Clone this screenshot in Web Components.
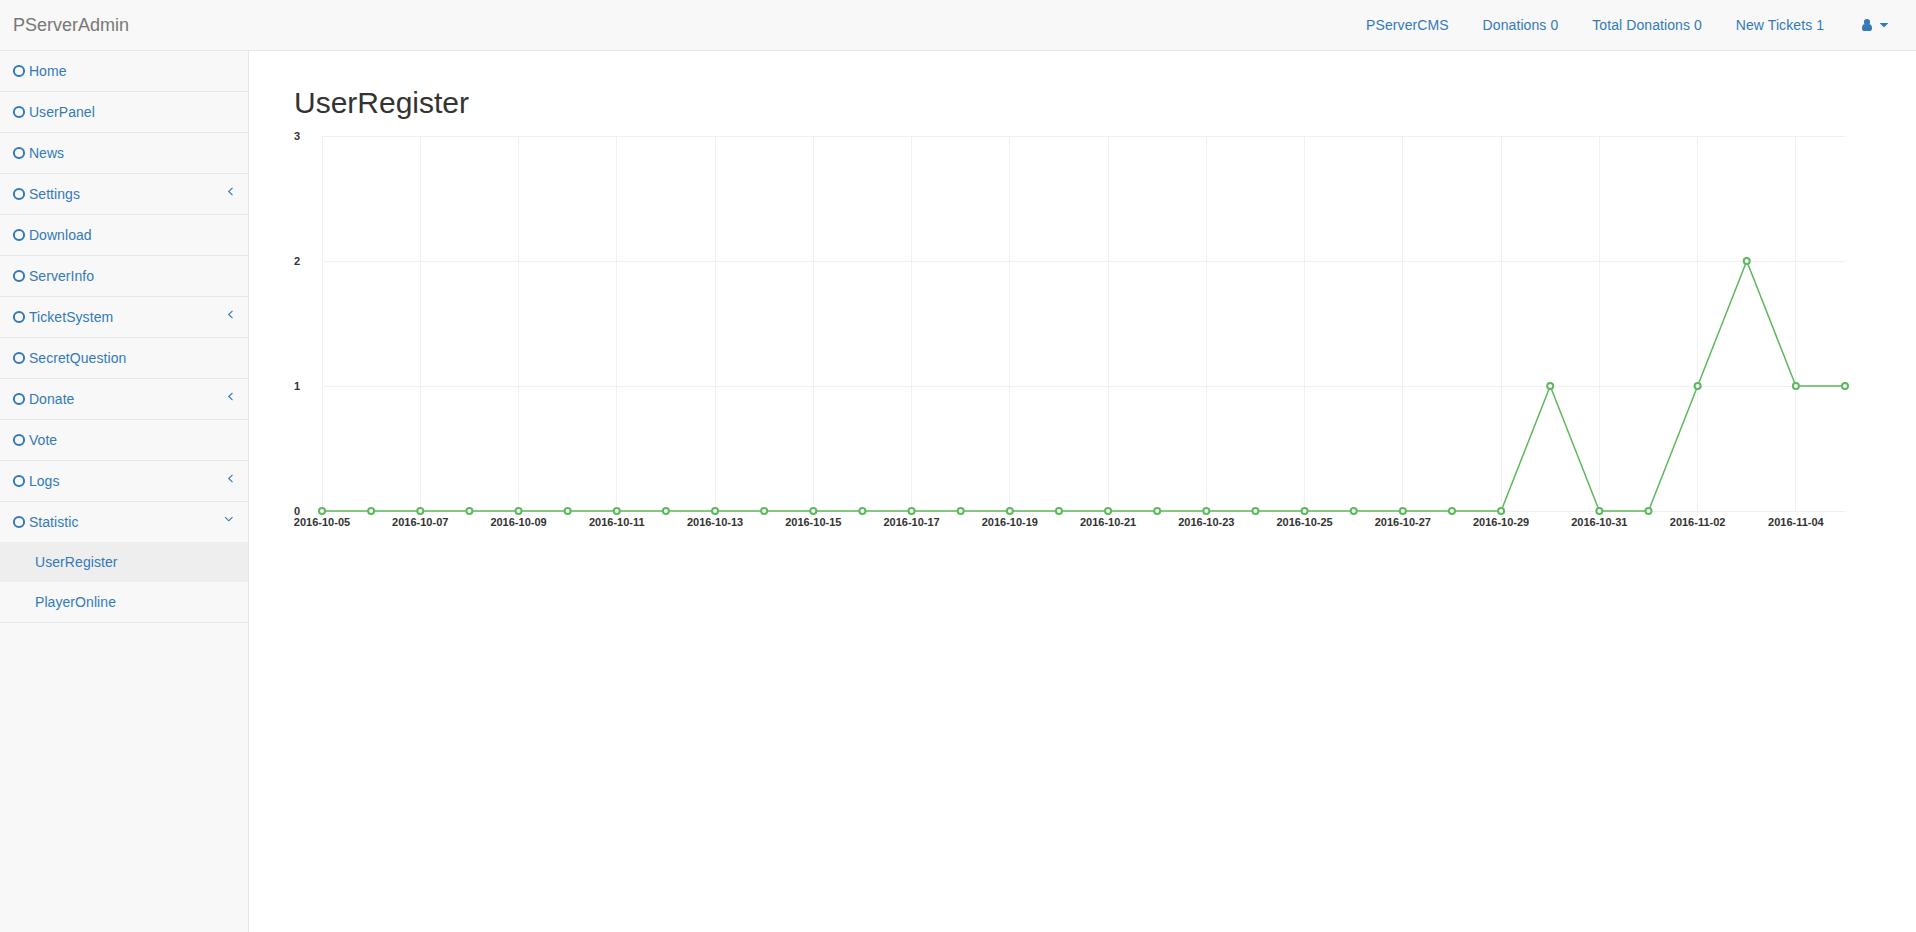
<!DOCTYPE html>
<html lang="en"><head><meta charset="utf-8"><title>PServerAdmin</title>
<style>
body{margin:0;background:#f8f8f8;color:#333;font:14px/20px "Liberation Sans",Arial,sans-serif}
</style></head><body>
<admin-shell>
  <top-bar slot="top" brand="PServerAdmin">
    <top-link>PServerCMS</top-link><top-link>Donations 0</top-link><top-link>Total Donations 0</top-link><top-link>New Tickets 1</top-link>
    <user-menu></user-menu>
  </top-bar>
  <side-nav slot="side">
    <side-item>Home</side-item><side-item>UserPanel</side-item><side-item>News</side-item>
    <side-item arrow="left">Settings</side-item><side-item>Download</side-item><side-item>ServerInfo</side-item>
    <side-item arrow="left">TicketSystem</side-item><side-item>SecretQuestion</side-item>
    <side-item arrow="left">Donate</side-item><side-item>Vote</side-item><side-item arrow="left">Logs</side-item>
    <side-item arrow="down">Statistic<side-subitem slot="sub" active>UserRegister</side-subitem><side-subitem slot="sub">PlayerOnline</side-subitem></side-item>
  </side-nav>
  <page-title>UserRegister</page-title>
  <line-chart start="2016-10-05" max="3" values="0,0,0,0,0,0,0,0,0,0,0,0,0,0,0,0,0,0,0,0,0,0,0,0,0,1,0,0,1,2,1,1"></line-chart>
</admin-shell>
<script>
function define(name, html, setup) {
  customElements.define(name, class extends HTMLElement {
    connectedCallback() {
      if (this.shadowRoot) return;
      this.attachShadow({mode: 'open'}).innerHTML = html;
      if (setup) setup(this, this.shadowRoot);
    }
  });
}

define('admin-shell', `<style>
:host{display:grid;grid-template:51px 1fr / 249px 1fr;min-height:100vh}
header{grid-column:1 / 3}
main{background:#fff;padding:0 45px;min-width:0}
aside{border-right:1px solid #e7e7e7;box-sizing:border-box}
</style><header><slot name="top"></slot></header><aside><slot name="side"></slot></aside><main><slot></slot></main>`);

define('top-bar', `<style>
:host{display:flex;justify-content:space-between;box-sizing:border-box;height:51px;border-bottom:1px solid #e7e7e7;background:#f8f8f8}
b{font-weight:400;font-size:18px;color:#777;padding:15px 13px}
nav{display:flex;gap:3.9px;padding-right:13px}
</style><b></b><nav><slot></slot></nav>`, (el, root) => { root.querySelector('b').textContent = el.getAttribute('brand'); });

define('top-link', `<style>:host{display:block;padding:15px;color:#337ab7;white-space:nowrap;letter-spacing:.09px}</style><slot></slot>`);

define('user-menu', `<style>
:host{display:flex;padding:15px 15px 15px 19px;color:#337ab7;gap:8px}
svg{display:block;fill:currentColor}
.u{margin-top:4px}.c{margin-top:8px}
</style><svg class="u" width="10" height="12" viewBox="0 0 10 12"><path d="M5 0a3.100 3.100 0 1 1 0 6.200A3.100 3.100 0 0 1 5 0zM2.500 5.300Q5 7.600 7.500 5.300C9.400 5.300 10 7.400 10 9.600 10 11 9.200 12 8 12H2C.8 12 0 11 0 9.600 0 7.400.6 5.300 2.500 5.300z"/></svg>
<svg class="c" width="8" height="5" viewBox="0 0 8 5"><path d="M.5 0h7q.8.1.3.7L4.400 4.100q-.4.3-.8 0L.2.700Q-.3.100.5 0z"/></svg>`);

define('side-nav', `<style>:host{display:block;letter-spacing:.07px}</style><slot></slot>`);

const arrows = {
  left: '<svg width="7" height="9" viewBox="0 0 7 9"><path d="M6.500.8 2.700 4.500l3.800 3.700"/></svg>',
  down: '<svg width="9" height="8" viewBox="0 0 9 8"><path d="M1.100 2.100l3.700 3.700 3.700-3.700"/></svg>'
};
define('side-item', `<style>
:host{display:block;border-bottom:1px solid #e7e7e7;color:#337ab7}
.row{display:flex;height:20px;padding:10px 15px 10px 13px}
.ring{width:12px;height:12px;margin:4px 3.9px 0 0;fill:none;stroke:currentColor;stroke-width:2;overflow:visible}
.arrow{margin:3px 0 0 auto}
.arrow svg{display:block;fill:none;stroke:currentColor;stroke-width:1.15}
</style><div class="row"><svg class="ring" viewBox="0 0 12 12"><circle cx="6" cy="6" r="5.100"/></svg><span><slot></slot></span><span class="arrow"></span></div><slot name="sub"></slot>`,
(el, root) => { root.querySelector('.arrow').innerHTML = arrows[el.getAttribute('arrow')] || ''; });

define('side-subitem', `<style>:host{display:block;padding:10px 15px 10px 35px}:host([active]){background:#eee}</style><slot></slot>`);

define('page-title', `<style>:host{display:block}h2{font-size:30px;line-height:33px;font-weight:400;margin:0;padding:35px 0 10px}</style><h2><slot></slot></h2>`);

define('line-chart', `<style>:host{display:block}svg{display:block;overflow:visible;font-family:"Liberation Sans",Arial,sans-serif;font-size:11px;font-weight:700}</style><svg width="1577" height="420"></svg>`,
(el, root) => {
  const values = el.getAttribute('values').split(',').map(Number), max = +el.getAttribute('max');
  const start = Date.parse(el.getAttribute('start'));
  const left = 28, width = 1523, top = 7.5, height = 375;
  const x = i => left + i * width / (values.length - 1);
  const y = v => top + height - v * height / max;
  let grid = '', text = '', dots = '';
  for (let v = 0; v <= max; v++) {
    grid += `<path d="M${left} ${y(v)}h${width}"/>`;
    text += `<text x="3" y="${y(v) + 3.5}">${v}</text>`;
  }
  values.forEach((v, i) => {
    if (i % 2 === 0) {
      grid += `<path d="M${Math.floor(x(i)) + .5} ${top}v${height}"/>`;
      text += `<text x="${x(i)}" y="397">${new Date(start + i * 864e5).toISOString().slice(0, 10)}</text>`;
    }
    dots += `<circle cx="${x(i)}" cy="${y(v) - .5}" r="3"/>`;
  });
  const line = values.map((v, i) => `${x(i)},${y(v) - .5}`).join(' ');
  root.querySelector('svg').innerHTML = `<g stroke="#f0f0f0">${grid}</g>
<g fill="#333" text-anchor="middle">${text}</g>
<polyline points="${line}" fill="none" stroke="#5cb85c" stroke-width="1.5"/>
<g fill="#fff" stroke="#5cb85c" stroke-width="2">${dots}</g>`;
});
</script></body></html>
